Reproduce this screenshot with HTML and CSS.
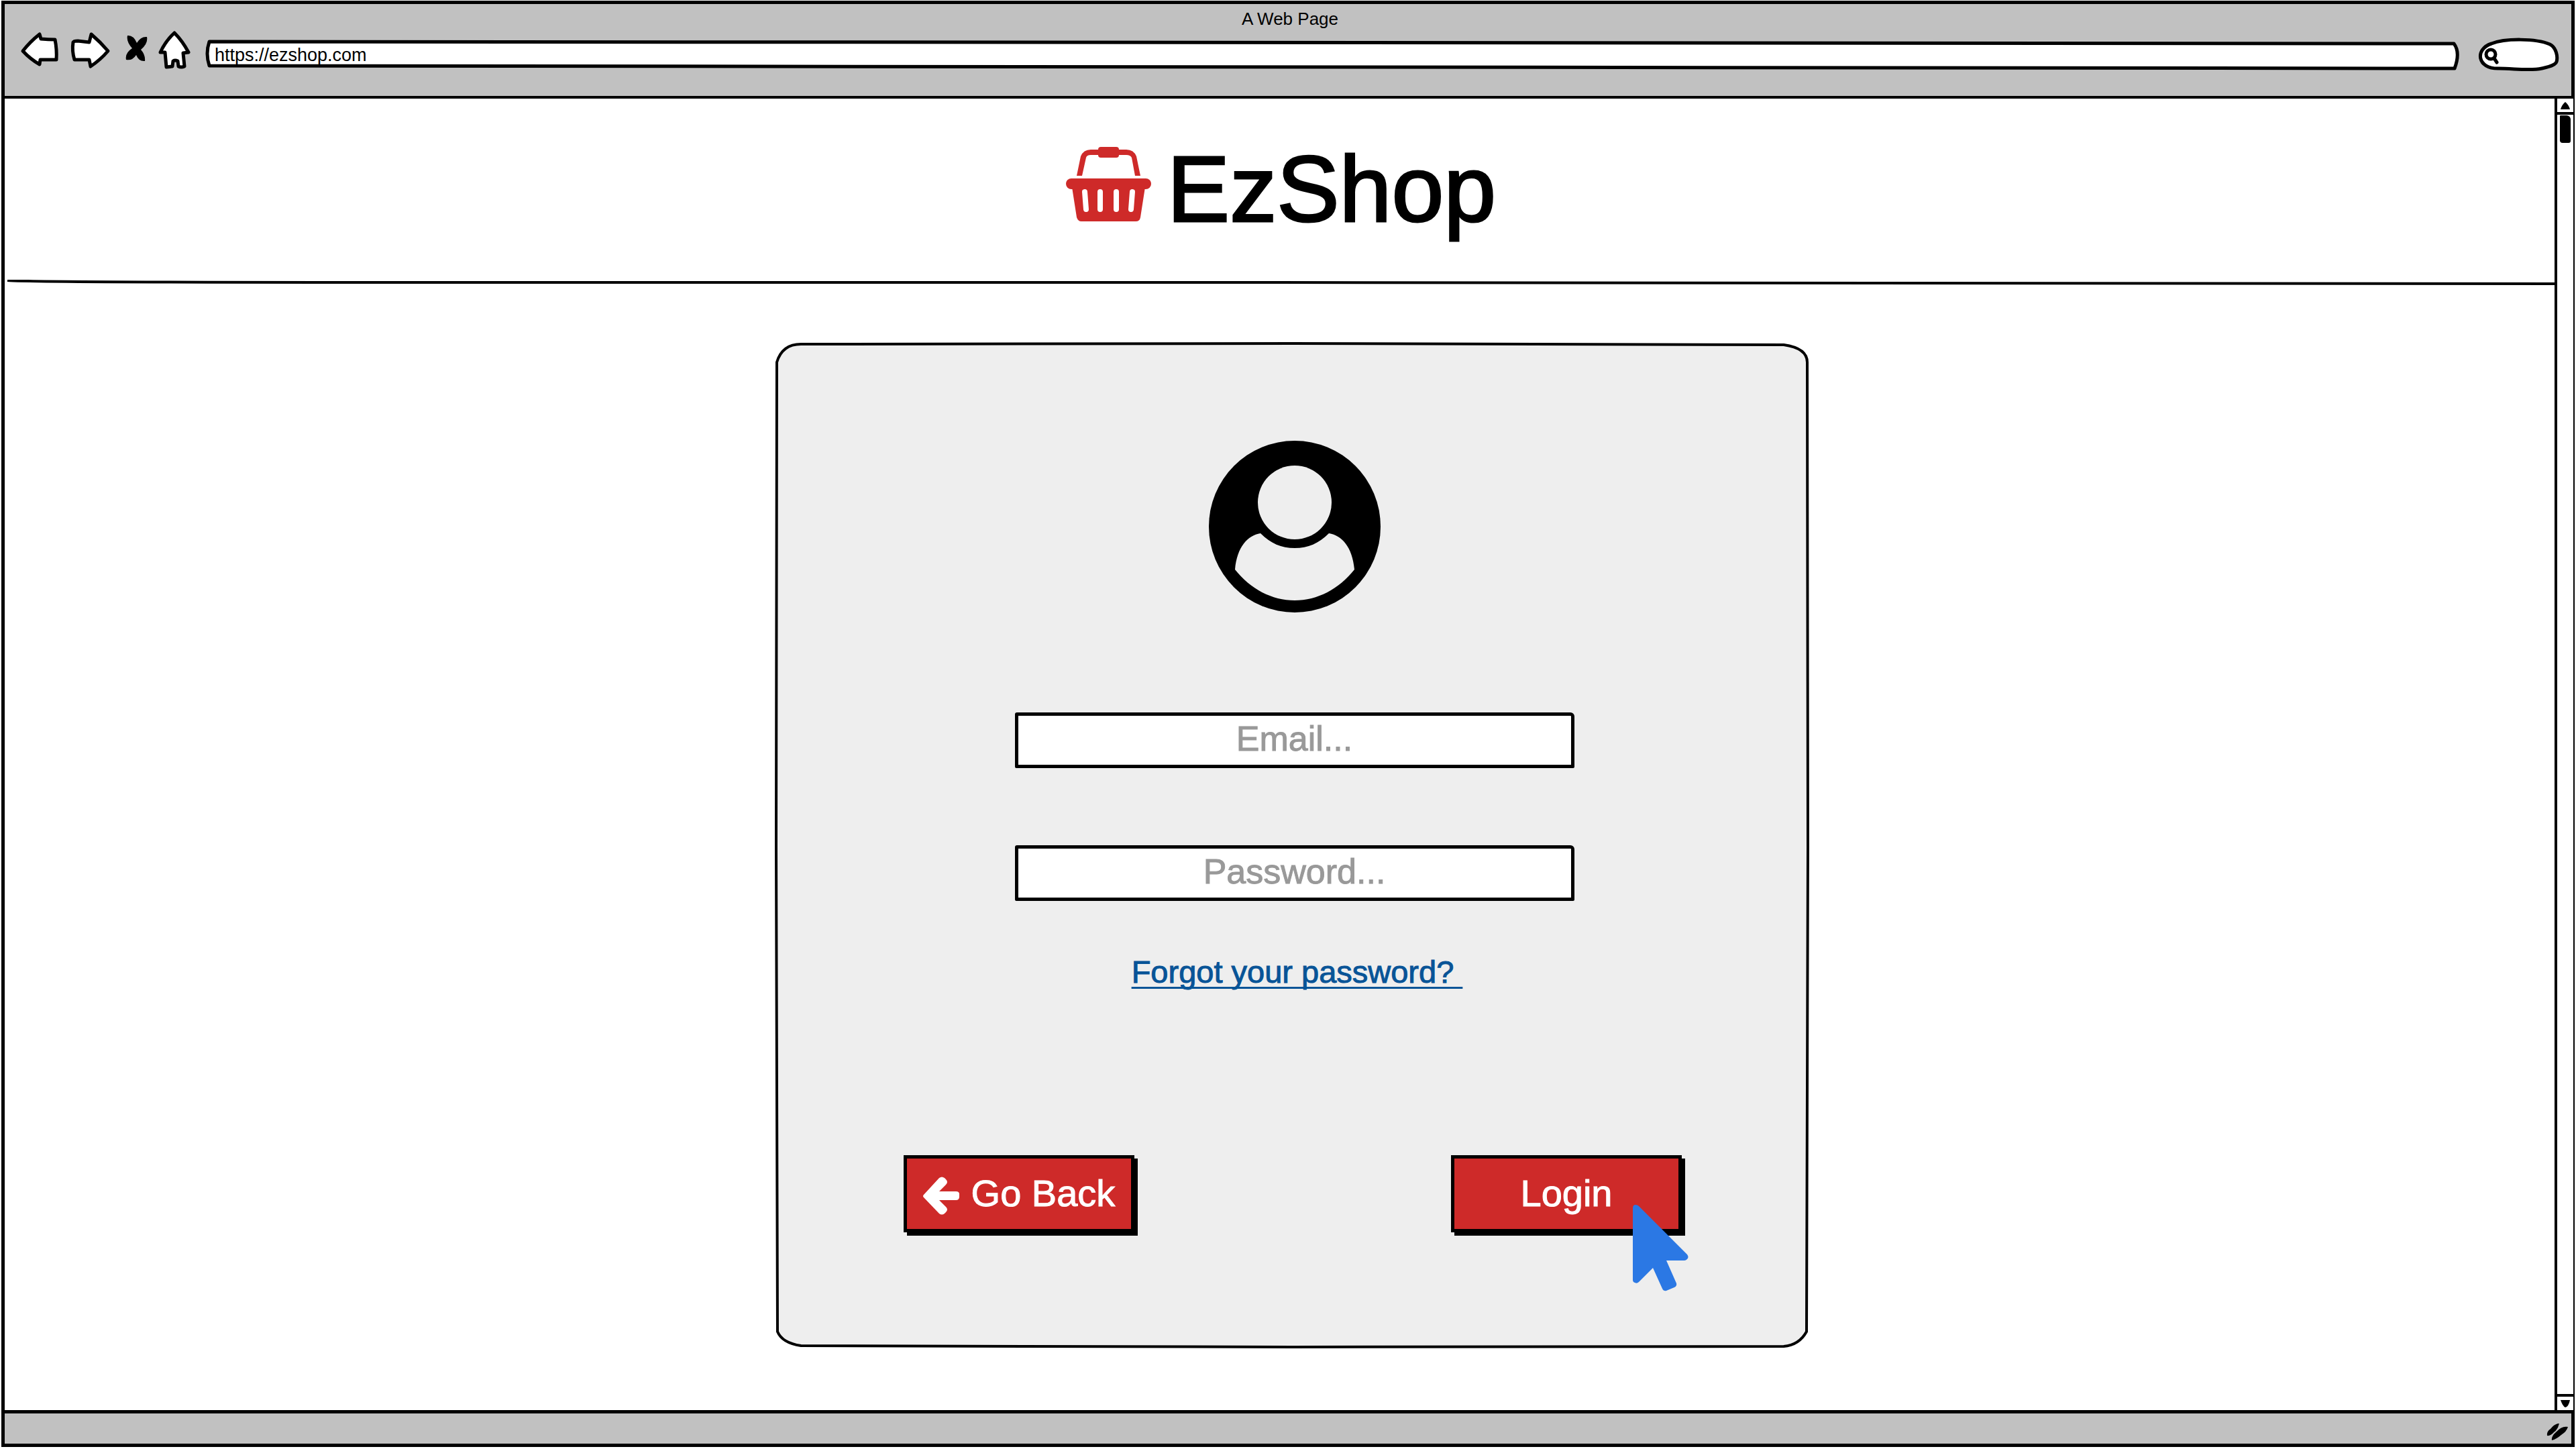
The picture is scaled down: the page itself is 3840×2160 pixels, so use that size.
FILE: index.html
```html
<!DOCTYPE html>
<html lang="en">
<head>
<meta charset="utf-8">
<meta name="viewport" content="width=device-width, initial-scale=1">
<title>EzShop - Login</title>
<link rel="stylesheet" href="styles.css">
</head>
<body>
<div class="window">
  <header class="chrome">
    <div class="chrome-title">A Web Page</div>
    <div class="toolbar">
      <nav class="nav-buttons" aria-label="Browser">
        <button class="nav-button" type="button" aria-label="Back">
          <svg class="sketch" width="58" height="60" viewBox="0 0 58 60"><path d="M4 31 Q15 17 29 6 L31 13 Q42 14 52 14 Q55 29 54 44 L30 44 L29 51 Q15 43 4 31Z"/></svg>
        </button>
        <button class="nav-button" type="button" aria-label="Forward">
          <svg class="sketch" width="62" height="60" viewBox="0 0 62 60"><path d="M5 18 Q6 16 12 16 L29 18 L32 6 Q46 18 57 31 Q46 44 31 54 L29 44 H7 Q3 31 5 18Z"/></svg>
        </button>
        <button class="nav-button" type="button" aria-label="Stop">
          <svg width="38" height="60" viewBox="0 0 38 60"><path d="M8 8 Q17 7 22 19 Q28 9 37 10 Q39 20 28 29 Q35 37 34 46 Q25 47 21 37 Q15 46 6 44 Q4 34 15 27 Q6 17 8 8Z"/></svg>
        </button>
        <button class="nav-button" type="button" aria-label="Home">
          <svg class="sketch" width="48" height="60" viewBox="0 0 48 60"><path d="M24 4 Q36 16 45 33 L37 34 L39 54 Q34 56 30 54 L29 46 Q25 44 22 46 L21 54 L12 55 L10 33 L3 33 Q11 16 24 4Z"/></svg>
        </button>
      </nav>
      <div class="url-box">
        <svg class="frame sketch" viewBox="0 0 3358 44" preserveAspectRatio="none" aria-hidden="true"><path d="M4 2 L3350 5 Q3360 18 3351 42 L4 38 Q-2 20 4 2Z"/></svg>
        <input class="url-input" type="text" aria-label="Address" value="https://ezshop.com">
      </div>
      <div class="search-box">
        <svg class="frame sketch" viewBox="0 0 124 52" preserveAspectRatio="none" aria-hidden="true"><path d="M33 47 C0 48 -3 18 22 10 C42 2 88 2 109 11 C119 16 121 30 119 37 C117 43 105 45 97 47 C80 51 55 47 33 47Z"/><circle cx="21" cy="26" r="7"/><path d="M26 32 L30 38"/></svg>
        <input class="search-input" type="search" aria-label="Search">
      </div>
    </div>
  </header>

  <div class="viewport">
    <div class="page">
      <div class="brand">
        <svg class="basket" width="127" height="111" viewBox="0 0 127 111" aria-hidden="true">
          <g fill="#ce2a29">
            <path d="M16 43 L22 14 Q26 4 37 4 H90 Q101 4 105 14 L111 43 H103 L98 16 Q96 12 90 12 H37 Q31 12 30 16 L24 43Z"/>
            <rect x="48" y="0" width="31" height="16" rx="4"/>
            <rect x="0" y="47" width="127" height="16" rx="8"/>
            <path d="M9 60 L16 105 Q18 111 23 111 H104 Q110 111 111 105 L118 60Z"/>
          </g>
          <path d="M28 67 L30 93 M51 67 V93 M75 67 V93 M99 67 L97 93" stroke="#fff" stroke-width="8" stroke-linecap="round"/>
        </svg>
        <h1 class="brand-name">EzShop</h1>
      </div>
      <svg class="rule" viewBox="0 0 3802 8" preserveAspectRatio="none" aria-hidden="true"><path d="M4 1 Q40 4 600 4 L1900 4 L3802 6"/></svg>

      <main class="content">
        <form class="card">
          <svg class="frame card-frame" viewBox="0 0 1540 1498" preserveAspectRatio="none" aria-hidden="true"><path d="M2 29 Q10 2 38 2 L770 1 L1503 3 Q1538 8 1538 29 L1539 750 L1537 1474 Q1526 1494 1503 1496 L770 1497 L38 1495 Q10 1491 3 1474 L1 750Z"/></svg>
          <svg class="avatar" width="256" height="256" viewBox="0 0 256 256" aria-hidden="true">
            <circle cx="128" cy="128" r="128"/>
            <circle cx="128" cy="92" r="55" fill="#eee"/>
            <path fill="#eee" d="M39 192 C42 158 58 141 77 138 C92 153 108 160 128 160 S164 153 179 138 C198 141 214 158 217 192 C194 221 162 238 128 238 S62 221 39 192Z"/>
          </svg>
          <div class="fields">
            <input class="field" type="email" aria-label="Email" placeholder="Email...">
            <input class="field" type="password" aria-label="Password" placeholder="Password...">
          </div>
          <a class="forgot" href="#">Forgot your password?&nbsp;</a>
          <div class="actions">
            <button class="button" type="button">
              <svg class="arrow" width="54" height="57" viewBox="0 0 54 57" aria-hidden="true"><path fill="#fff" d="M1 27 Q-1 29 1 31 L24 55 Q28 58 32 55 L34 53 Q38 49 34 45 L24 35 H49 Q54 35 54 30 V26 Q54 22 49 22 H24 L34 12 Q38 8 34 4 L32 2 Q28 -1 24 2Z"/></svg>
              Go Back
            </button>
            <div class="login">
              <button class="button" type="submit">Login</button>
              <svg class="cursor" width="84" height="129" viewBox="0 0 84 129" aria-hidden="true"><path fill="#2b78e4" d="M0 5 Q0 0 4 0 Q7 0 9 2 L81 74 Q84 78 81 81 Q79 83 77 83 H50 L65 117 Q66 121 62 123 L50 128 Q46 129 44 125 L30 94 L9 115 Q6 118 3 116 Q0 115 0 112Z"/></svg>
            </div>
          </div>
        </form>
      </main>
    </div>

    <div class="scrollbar" aria-hidden="true">
      <div class="scroll-up"><svg width="16" height="11" viewBox="0 0 16 11"><path d="M8 0 Q13 4 15 11 H1 Q3 4 8 0Z"/></svg></div>
      <div class="scroll-thumb"></div>
      <div class="scroll-down"><svg width="16" height="11" viewBox="0 0 16 11"><path d="M1 0 H15 Q13 10 8 11 Q4 9 1 0Z"/></svg></div>
    </div>
  </div>

  <footer class="statusbar">
    <svg width="34" height="28" viewBox="0 0 34 28" aria-hidden="true"><path d="M2 19 Q1 13 7 9 Q13 1 20 1 Q18 10 12 14 Q7 20 2 19Z M9 26 Q8 20 15 14 Q24 4 33 6 Q31 13 23 18 Q15 25 9 26Z"/></svg>
  </footer>
</div>
</body>
</html>
```
FILE: styles.css
```css
* {
  box-sizing: border-box;
}

body {
  margin: 0;
  padding: 1px 2px 3px;
  background: #fff;
  color: #000;
  font-family: "Liberation Sans", Arial, sans-serif;
}

svg {
  display: block;
  flex: none;
}

button,
input {
  font-family: inherit;
  color: inherit;
}

.window {
  display: flex;
  flex-direction: column;
  min-height: calc(100vh - 4px);
  border: 5px solid #000;
}

.sketch {
  fill: #fff;
  stroke: #000;
  stroke-width: 5px;
  stroke-linejoin: round;
  stroke-linecap: round;
}

.frame {
  position: absolute;
  inset: 0;
  width: 100%;
  height: 100%;
  overflow: visible;
}

/* Browser bar */

.chrome {
  display: flex;
  flex-direction: column;
  padding: 8px 17px 35px 23px;
  border-bottom: 4px solid #000;
  background: #c1c1c1;
}

.chrome-title {
  font-size: 26px;
  line-height: 28px;
  text-align: center;
}

.toolbar {
  display: flex;
  align-items: center;
  gap: 24px;
  height: 66px;
}

.nav-buttons {
  display: flex;
  gap: 16px;
}

.nav-button {
  padding: 0;
  border: 0;
  background: none;
}

.url-box {
  position: relative;
  flex: 1;
  height: 44px;
  margin-top: 14px;
  margin-right: 2px;
}

.url-input {
  position: relative;
  width: 100%;
  height: 44px;
  padding: 0 12px;
  border: 0;
  background: none;
  font-size: 27px;
}

.search-box {
  position: relative;
  width: 124px;
  height: 52px;
  margin-top: 12px;
}

.search-input {
  position: relative;
  width: 100%;
  height: 52px;
  padding: 0 16px 0 40px;
  border: 0;
  background: none;
  font-size: 27px;
}

/* Page */

.viewport {
  display: flex;
  flex: 1;
}

.page {
  flex: 1;
}

.brand {
  display: flex;
  align-items: center;
  justify-content: center;
  gap: 24px;
  height: 270px;
  padding-left: 4px;
}

.basket {
  margin-bottom: 16px;
}

.brand-name {
  margin: 0;
  font-size: 140px;
  line-height: 160px;
  font-weight: 400;
  -webkit-text-stroke: 3px #000;
  stroke-linejoin: round;
}

.rule {
  width: 100%;
  height: 8px;
  fill: none;
  stroke: #000;
  stroke-width: 4px;
}

.content {
  display: flex;
  justify-content: center;
  padding: 86px 0 93px 36px;
}

.card {
  position: relative;
  display: flex;
  flex-direction: column;
  align-items: center;
  width: 1540px;
  max-width: 100%;
  padding: 146px 0 172px 8px;
}

.card-frame {
  fill: #eee;
  stroke: #000;
  stroke-width: 4px;
}

.avatar,
.fields,
.forgot,
.actions {
  position: relative;
}

.fields {
  display: flex;
  flex-direction: column;
  gap: 115px;
  margin-top: 149px;
}

.field {
  width: 834px;
  height: 83px;
  padding: 0 12px 6px;
  border: 5px solid #000;
  border-radius: 3px 6px 2px 2px;
  background: #fff;
  font-size: 52px;
  text-align: center;
}

.field::placeholder {
  color: #999;
  opacity: 1;
  -webkit-text-stroke: 1px #999;
}

.forgot {
  margin-top: 78px;
  margin-left: 8px;
  color: #085497;
  font-size: 47px;
  line-height: 56px;
  text-decoration: underline 3px;
  text-underline-offset: 6px;
  text-decoration-skip-ink: none;
  -webkit-text-stroke: 1px #085497;
}

.actions {
  display: flex;
  justify-content: space-between;
  width: 1165px;
  margin-top: 245px;
  padding-right: 5px;
}

.button {
  display: flex;
  align-items: center;
  justify-content: center;
  gap: 18px;
  width: 344px;
  height: 115px;
  padding: 0 0 2px;
  border: 5px solid #000;
  background: #ce2a29;
  box-shadow: 5px 5px 0 #000;
  color: #fff;
  font-size: 56px;
  -webkit-text-stroke: 1px #fff;
}

.arrow {
  margin-top: 8px;
}

.login {
  position: relative;
}

.cursor {
  position: absolute;
  left: 271px;
  top: 74px;
}

/* Scrollbar and status bar */

.scrollbar {
  display: flex;
  flex-direction: column;
  align-items: center;
  z-index: 1;
  width: 28px;
  margin-right: -3px;
  border-left: 4px solid #000;
  background: #fff;
}

.scroll-up,
.scroll-down {
  display: flex;
  justify-content: center;
  width: 100%;
  padding: 5px 0 4px;
}

.scroll-up {
  border-bottom: 4px solid #000;
}

.scroll-thumb {
  width: 16px;
  height: 41px;
  margin-top: 1px;
  border-radius: 1px 6px 3px 4px;
  background: #000;
}

.scroll-down {
  margin-top: auto;
  border-top: 4px solid #000;
}

.statusbar {
  display: flex;
  justify-content: flex-end;
  padding: 14px 4px 3px;
  border-top: 5px solid #000;
  background: #c1c1c1;
}
```
